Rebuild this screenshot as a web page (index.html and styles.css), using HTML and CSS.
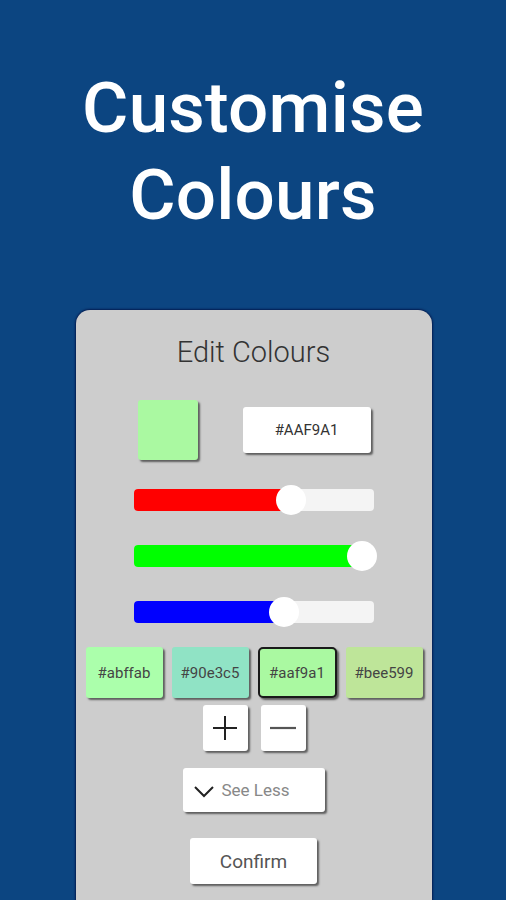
FILE: index.html
```html
<!DOCTYPE html>
<html lang="en">
<head>
<meta charset="utf-8">
<title>Customise Colours</title>
<link rel="stylesheet" href="styles.css">
</head>
<body>
<div class="page">
  <h1 class="headline">Customise<br>Colours</h1>
  <div class="card">
    <h2 class="card-title">Edit Colours</h2>
    <div class="preview-row">
      <div class="swatch"></div>
      <div class="hex-box">#AAF9A1</div>
    </div>
    <div class="sliders">
      <div class="slider">
        <div class="track"><div class="fill fill-red" style="width:157px"></div></div>
        <div class="thumb" style="left:142px"></div>
      </div>
      <div class="slider">
        <div class="track"><div class="fill fill-green" style="width:228px"></div></div>
        <div class="thumb" style="left:213px"></div>
      </div>
      <div class="slider">
        <div class="track"><div class="fill fill-blue" style="width:150px"></div></div>
        <div class="thumb" style="left:135px"></div>
      </div>
    </div>
    <div class="chips">
      <div class="chip chip-1">#abffab</div>
      <div class="chip chip-2">#90e3c5</div>
      <div class="chip chip-3 selected">#aaf9a1</div>
      <div class="chip chip-4">#bee599</div>
    </div>
    <div class="pm-row">
      <div class="pm-btn">
        <svg width="26" height="26" viewBox="0 0 26 26"><path d="M13 1v24M1 13h24" stroke="#222" stroke-width="2" fill="none"/></svg>
      </div>
      <div class="pm-btn">
        <svg width="28" height="26" viewBox="0 0 28 26"><path d="M1 13h26" stroke="#555" stroke-width="2.2" fill="none"/></svg>
      </div>
    </div>
    <div class="see-less">
      <svg class="chev" width="22" height="14" viewBox="0 0 22 14"><path d="M2 3l9 9 9-9" stroke="#222" stroke-width="2" fill="none"/></svg>
      <span>See Less</span>
    </div>
    <div class="confirm">Confirm</div>
  </div>
</div>
</body>
</html>
```
FILE: styles.css
```css
html, body {
  margin: 0;
  padding: 0;
  height: 100%;
  overflow: hidden;
}
body {
  background: #0c4581;
  font-family: Roboto, "Liberation Sans", sans-serif;
}
.page {
  display: flex;
  flex-direction: column;
  align-items: center;
  padding-top: 64px;
}
.headline {
  margin: 0;
  color: #fff;
  font-weight: 500;
  font-size: 71px;
  line-height: 87px;
  text-align: center;
  letter-spacing: 0.2px;
}
.card {
  margin-top: 72px;
  width: 356px;
  background: #cdcdcd;
  border-radius: 14px;
  box-shadow: 0 0 2px 1px rgba(0, 10, 60, 0.7);
  display: flex;
  flex-direction: column;
  align-items: center;
  padding: 24px 0 80px;
  margin-left: 1px;
}
.card-title {
  margin: 0;
  font-weight: 300;
  font-size: 29px;
  line-height: 36px;
  color: #333;
}
.preview-row {
  margin-top: 30px;
  display: flex;
  align-items: center;
  gap: 45px;
  padding-left: 1px;
}
.swatch {
  width: 60px;
  height: 60px;
  background: #aaf9a1;
  border-radius: 3px;
  box-shadow: 2px 2px 2px rgba(0, 0, 0, 0.55);
}
.hex-box {
  width: 128px;
  height: 46px;
  background: #fff;
  border-radius: 3px;
  box-shadow: 2px 2px 2px rgba(0, 0, 0, 0.55);
  display: flex;
  align-items: center;
  justify-content: center;
  font-size: 15px;
  color: #333;
}
.sliders {
  margin-top: 25px;
  display: flex;
  flex-direction: column;
  gap: 26px;
}
.slider {
  position: relative;
  width: 240px;
  height: 30px;
  display: flex;
  align-items: center;
}
.track {
  width: 240px;
  height: 22px;
  background: #f4f4f4;
  border-radius: 4px;
  overflow: hidden;
  display: flex;
}
.fill { height: 100%; }
.fill-red { background: #ff0000; }
.fill-green { background: #00ff00; }
.fill-blue { background: #0000ff; }
.thumb {
  position: absolute;
  top: 0;
  width: 30px;
  height: 30px;
  border-radius: 50%;
  background: #fff;
}
.chips {
  margin-top: 20px;
  display: flex;
  gap: 9px;
  padding-left: 1px;
}
.chip {
  width: 77px;
  height: 51px;
  box-sizing: border-box;
  border-radius: 3px;
  box-shadow: 2px 2px 2px rgba(0, 0, 0, 0.55);
  display: flex;
  align-items: center;
  justify-content: center;
  font-size: 15px;
  color: #444;
}
.chip-1 { background: #abffab; }
.chip-2 { background: #90e3c5; }
.chip-3 { background: #aaf9a1; }
.chip-4 { background: #bee599; }
.chip.selected {
  width: 79px;
  border: 2px solid #1a1a1a;
  border-radius: 5px;
}
.pm-row {
  margin-top: 7px;
  display: flex;
  gap: 13px;
  padding-left: 1px;
}
.pm-btn {
  width: 45px;
  height: 46px;
  background: #fff;
  border-radius: 3px;
  box-shadow: 2px 2px 2px rgba(0, 0, 0, 0.55);
  display: flex;
  align-items: center;
  justify-content: center;
}
.see-less {
  margin-top: 17px;
  width: 142px;
  height: 44px;
  background: #fff;
  border-radius: 3px;
  box-shadow: 2px 2px 2px rgba(0, 0, 0, 0.55);
  display: flex;
  align-items: center;
  box-sizing: border-box;
  padding-left: 10px;
  gap: 7px;
  font-size: 17px;
  color: #888;
}
.chev { margin-top: 2px; }
.confirm {
  margin-top: 26px;
  width: 127px;
  height: 46px;
  background: #fff;
  border-radius: 3px;
  box-shadow: 2px 2px 2px rgba(0, 0, 0, 0.55);
  display: flex;
  align-items: center;
  justify-content: center;
  font-size: 19px;
  color: #555;
}
```
